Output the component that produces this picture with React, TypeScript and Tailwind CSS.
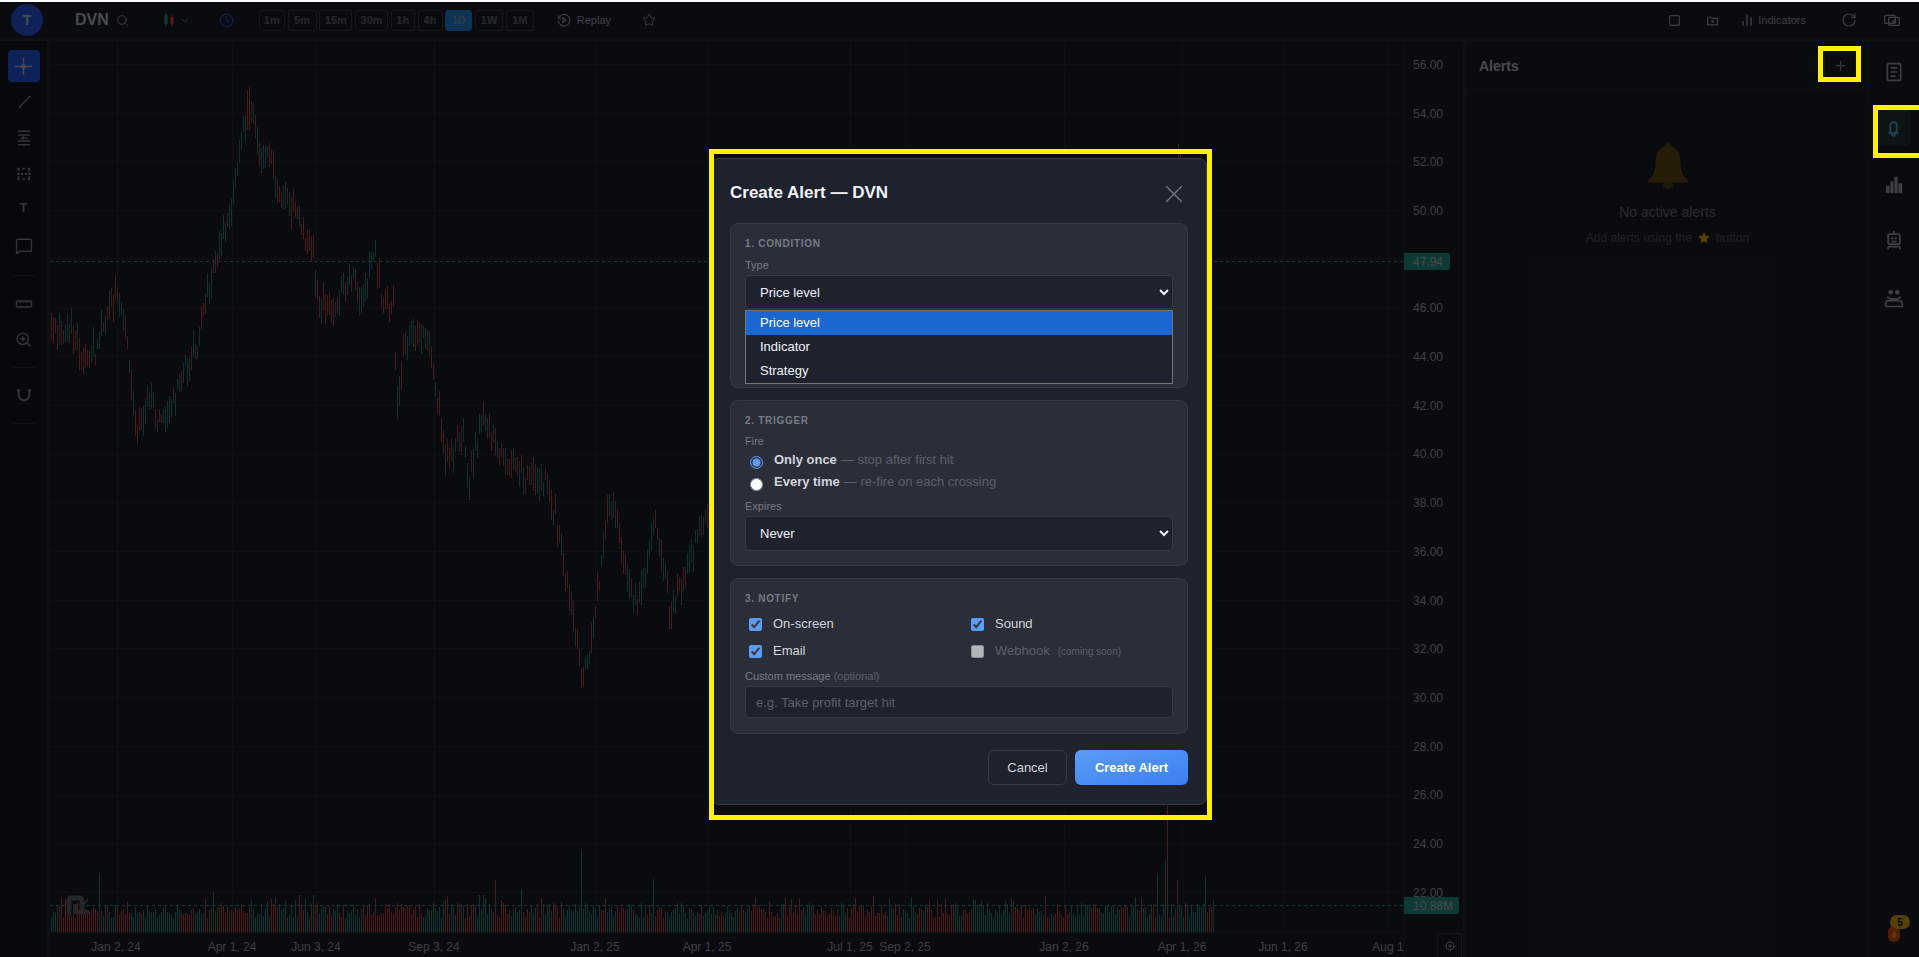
import React from "react";
import { Search, ChevronDown, Clock, Star, X, Plus, MessageSquare, ZoomIn, Square, RotateCw, ChartNoAxesColumn } from "lucide-react";

function rng(seed: number) {
  return () => {
    seed |= 0; seed = (seed + 0x6d2b79f5) | 0;
    let t = Math.imul(seed ^ (seed >>> 15), 1 | seed);
    t = (t + Math.imul(t ^ (t >>> 7), 61 | t)) ^ t;
    return ((t ^ (t >>> 14)) >>> 0) / 4294967296;
  };
}

const KEY: [number, number][] = [
  [52,327],[60,337],[70,325],[83,363],[95,350],[110,300],[120,297],[128,350],[135,433],[150,397],[160,430],[177,387],[197,343],[213,267],[230,213],[243,130],[250,104],[256,130],[260,163],[270,153],[277,193],[298,213],[313,260],[318,297],[333,313],[350,273],[362,303],[373,250],[383,303],[393,310],[397,413],[403,347],[425,330],[437,400],[447,463],[463,430],[468,487],[483,410],[507,467],[523,473],[547,480],[557,527],[573,617],[582,680],[592,640],[607,510],[613,500],[630,593],[638,607],[655,513],[670,613],[687,573],[700,523],[708,520],[800,500],[1000,400],[1170,300],[1200,300],
];
function priceY(x: number) {
  for (let i = 0; i < KEY.length - 1; i++) {
    const [a, b] = KEY[i], [c, d] = KEY[i + 1];
    if (x >= a && x <= c) return b + ((d - b) * (x - a)) / (c - a);
  }
  return KEY[0][1];
}

const gridX = [117, 232, 316, 434, 595, 707, 850, 905, 1064, 1182, 1283, 1388];
const gridY = Array.from({ length: 18 }, (_, i) => 64 + i * 48.7);

function buildSeries() {
  const r = rng(11);
  let up = "", down = "", volUp = "", volDown = "";
  const spikes: Record<number, [number, boolean]> = {
    99: [873, true], 213: [892, true], 313: [895, true], 495: [880, false], 521: [889, true], 581: [849, true], 653: [879, true], 1167: [800, false], 1165: [860, true], 1157: [873, true], 1205: [876, true], 1177: [880, false],
  };
  let last = priceY(51);
  let run = 0;
  let runUp = true;
  for (let x = 51; x <= 1213; x += 2) {
    const y = priceY(x);
    const isUp = y < last ? r() < 0.68 : r() < 0.36;
    last = y;
    if (run <= 0) { run = 1 + Math.floor(r() * 5); runUp = r() > 0.5; }
    run--;
    if (x <= 1206) {
      const c = y + (r() - 0.5) * 18;
      const top = Math.round(c - 4 - r() * 14);
      const bot = Math.round(c + 4 + r() * 14);
      const seg = `M${x + 0.5} ${top}V${bot}`;
      if (isUp) up += seg; else down += seg;
    }
    const sp = spikes[x];
    const volTop = sp ? sp[0] : Math.round(918 - r() * 15 - (r() < 0.15 ? 8 : 0));
    const green = sp ? sp[1] : runUp;
    const seg = `M${x + 0.5} ${volTop}V932`;
    if (green) volUp += seg; else volDown += seg;
  }
  return { up, down, volUp, volDown };
}
const S = buildSeries();

function Chart() {
  return (
    <svg viewBox="50 41 1353 891" className="block w-[1353px] h-[891px]" shapeRendering="crispEdges">
      {gridX.map((x) => <path key={x} d={`M${x + 0.5} 41V932`} stroke="#2a2e39" />)}
      {gridY.map((y) => <path key={y} d={`M50 ${Math.round(y) + 0.5}H1403`} stroke="#2a2e39" />)}
      <path d={S.volUp} stroke="#26a69a" strokeOpacity="0.9" fill="none" />
      <path d={S.volDown} stroke="#ef5350" strokeOpacity="0.9" fill="none" />
      <path d={S.up} stroke="#26a69a" strokeOpacity="0.85" fill="none" />
      <path d={S.down} stroke="#ef5350" strokeOpacity="0.85" fill="none" />
      <path d="M1178.5 144V175M1180.5 150V175M247.500 90V130M249.500 87V131" stroke="#ef5350" strokeOpacity="0.85" fill="none" />
      <path d="M50 261.5H1403M50 905.5H1403" stroke="#26a69a" strokeDasharray="3 3" />
      <g shapeRendering="auto" fill="none" stroke="#6a6d78" strokeWidth="5">
        <path d="M71 913c-1 0-2-1-2-3v-9c0-2 1-3 3-3h7c2 0 3 1 3 3v10" />
        <path d="M75 904v8h14" strokeWidth="4" />
        <path d="M88 899l-6 8" strokeWidth="1.5" />
      </g>
    </svg>
  );
}

const I = ({ children, className = "w-[18px] h-[18px]" }: { children: React.ReactNode; className?: string }) => (
  <svg viewBox="0 0 24 24" fill="none" stroke="currentColor" strokeWidth="2" className={className}>{children}</svg>
);

function LeftBar() {
  return (
    <div className="flex flex-col items-center w-[47px] bg-[#131722] text-[#9598a1]">
      <div className="mt-[9px] flex items-center justify-center w-8 h-8 rounded bg-[#2962ff] text-[#d1d4dc]">
        <I className="w-[19px] h-[19px]"><path d="M12 1v22M1 12h22" strokeWidth="1.8" /><circle cx="12" cy="12" r="3" fill="currentColor" stroke="none" /></I>
      </div>
      <div className="mt-[2px] flex flex-col items-center w-full">
        <div className="h-9 flex items-center"><I><path d="M5 20 20 4" /></I></div>
        <div className="h-9 flex items-center"><I><path d="M4 3h16M4 8h16M4 16h16M4 21h16" strokeWidth="2" /><path d="M8 12h8M10 10l2 2-2 2" strokeWidth="2" /></I></div>
        <div className="h-9 flex items-center"><I><path d="M3 5h4M10 5h4M17 5h4M3 19h4M10 19h4M17 19h4M3 12h18M5 5v14M19 5v14" strokeDasharray="3 2" strokeWidth="2.6" /></I></div>
        <div className="h-9 flex items-center text-[13px] font-bold mt-[-2px]">T</div>
        <div className="h-9 flex items-center mt-[2px]"><MessageSquare className="w-[18px] h-[18px]" strokeWidth={1.8} /></div>
      </div>
      <div className="mt-[11px] w-6 h-px bg-[#2a2e39]" />
      <div className="mt-[10px] h-9 flex items-center"><I className="w-[18px] h-[18px]"><rect x="2" y="8" width="20" height="8" rx="2" strokeWidth="2.2" /><path d="M7 8v3M11 8v3M15 8v3M19 8v3" strokeWidth="1.4" /></I></div>
      <div className="h-9 mt-[-1px] flex items-center"><ZoomIn className="w-[17px] h-[17px]" strokeWidth={2} /></div>
      <div className="mt-[10px] w-6 h-px bg-[#2a2e39]" />
      <div className="mt-[9px] h-9 flex items-center"><I className="w-[16px] h-[16px]"><path d="M4 3v9a8 8 0 0 0 16 0V3" strokeWidth="3" /><path d="M1.500 5h5M17.500 5h5" strokeWidth="1.500" /></I></div>
      <div className="mt-[10px] w-6 h-px bg-[#2a2e39]" />
    </div>
  );
}

const intervals: [string, string][] = [["1m", "w-[26px]"], ["5m", "w-[29px]"], ["15m", "w-[33px]"], ["30m", "w-[33px]"], ["1h", "w-[24px]"], ["4h", "w-[25px]"], ["1D", "w-[27px]"], ["1W", "w-[28px]"], ["1M", "w-[28px]"]];

function Header() {
  return (
    <div className="flex items-center h-[36px] bg-[#1e222d] text-[#b2b5be]">
      <div className="ml-[11px] flex items-center justify-center w-8 h-8 rounded-full bg-[#2962ff] text-[14px] font-bold text-[#d1d4dc]">T</div>
      <div className="ml-[32px] text-[16px] font-bold text-[#d1d4dc]">DVN</div>
      <Search className="ml-[7px] w-[13px] h-[13px]" strokeWidth={1.8} />
      <svg viewBox="0 0 16 22" className="ml-[34px] w-3 h-[18px]"><path d="M4 1v20" stroke="#26a69a" /><rect x="2" y="4" width="4" height="13" fill="#26a69a" /><path d="M12 3v18" stroke="#ef5350" /><rect x="10" y="7" width="4" height="10" fill="#ef5350" /></svg>
      <ChevronDown className="ml-[4px] w-[11px] h-[11px]" strokeWidth={2} />
      <Clock className="ml-[29px] w-[15px] h-[15px] text-[#2962ff]" strokeWidth={1.8} />
      <div className="ml-[25px] flex items-center gap-[2.75px]">
        {intervals.map(([t, w]) => (
          <div key={t} className={`${w} h-[21px] flex items-center justify-center rounded-[3px] border text-[11px] font-bold ${t === "1D" ? "bg-[#2196f3] border-[#2196f3] text-[#7fa8c9]" : "border-[#434651] text-[#6f7280]"}`}>{t}</div>
        ))}
      </div>
      <svg viewBox="0 0 24 24" fill="none" stroke="currentColor" strokeWidth="1.8" className="ml-[23px] w-[14px] h-[14px]"><path d="M3 8a10 10 0 1 1-1 5" /><path d="M2 4v5h5" /><path d="M10 8l5 4-5 4z" /></svg>
      <span className="ml-[6px] text-[11px]">Replay</span>
      <Star className="ml-[31px] w-[14px] h-[14px]" strokeWidth={1.6} />
      <div className="flex-1" />
      <Square className="w-[13px] h-[13px]" strokeWidth={2} />
      <svg viewBox="0 0 24 24" fill="none" stroke="currentColor" strokeWidth="2" className="ml-[25px] w-[13px] h-[13px]"><path d="M3 6h6l2 2h10v12H3z" /><circle cx="12" cy="14" r="1.4" fill="currentColor" /></svg>
      <ChartNoAxesColumn className="ml-[21px] w-[14px] h-[14px]" strokeWidth={2.4} />
      <span className="ml-[4px] text-[11px]">Indicators</span>
      <RotateCw className="ml-[35px] w-[16px] h-[16px]" strokeWidth={1.8} />
      <svg viewBox="0 0 24 20" fill="none" stroke="currentColor" strokeWidth="2" className="ml-[27px] mr-[19px] w-[16px] h-[14px]"><rect x="1" y="3" width="16" height="12" rx="2" /><rect x="7" y="6" width="16" height="12" rx="2" /><path d="M15 9v6M12 12h6" strokeWidth="1.6" /></svg>
    </div>
  );
}

const prices = ["56.00","54.00","52.00","50.00","48.00","46.00","44.00","42.00","40.00","38.00","36.00","34.00","32.00","30.00","28.00","26.00","24.00","22.00"];
const times: [string, number][] = [["Jan 2, 24",116],["Apr 1, 24",232],["Jun 3, 24",316],["Sep 3, 24",434],["Jan 2, 25",595],["Apr 1, 25",707],["Jul 1, 25",850],["Sep 2, 25",905],["Jan 2, 26",1064],["Apr 1, 26",1182],["Jun 1, 26",1283],["Aug 1",1388]];

function PriceAxis() {
  return (
    <div className="relative w-[60px] border-l border-[#2a2e39] text-[12px] text-[#b2b5be] leading-none">
      <div className="mt-[-0.4px] flex flex-col pl-[9px]">
        {prices.map((p) => <div key={p} className="h-[48.7px] shrink-0 flex items-center">{p}</div>)}
      </div>
      <div className="absolute left-0 top-[212px] w-[46px] h-[17px] rounded-r-[2px] bg-[#26a69a] text-[#d1d4dc] flex items-center pl-[9px]">47.94</div>
      <div className="absolute left-0 top-[856px] w-[55px] h-[17px] rounded-r-[2px] bg-[#26a69a] text-[#d1d4dc] flex items-center pl-[9px]">10.88M</div>
      <div className="absolute left-[33px] bottom-0 w-[25px] h-[24px] border border-b-0 border-[#434651] rounded-t-[3px] flex items-center justify-center">
        <svg viewBox="0 0 24 24" fill="none" stroke="currentColor" strokeWidth="2" className="w-[12px] h-[12px]"><circle cx="12" cy="12" r="8" /><circle cx="12" cy="12" r="2.5" /><path d="M12 1v3M12 20v3M1 12h3M20 12h3" /></svg>
      </div>
    </div>
  );
}

function AlertsPanel() {
  return (
    <div className="flex-1 flex flex-col">
      <div className="h-[49px] shrink-0 flex items-center justify-between border-b border-[#2a2e39] pl-[12px] pr-[12px]">
        <span className="mt-[2px] text-[14px] font-bold text-[#d1d4dc]">Alerts</span>
        <div className="w-[32px] h-[26px] flex items-center justify-center rounded-[3px] border border-[#2a2e39] text-[#9598a1]"><Plus className="w-[15px] h-[15px]" strokeWidth={2} /></div>
      </div>
      <div className="flex flex-col items-center pt-[51px]">
        <svg viewBox="0 0 48 52" className="w-[44px] h-[49px]"><path d="M24 1c2 0 3.500 1.500 3.500 3.500 C36 7 38 14 38 24c0 8 3 13 8 18c1 2 0 3-2 3H4c-2 0-3-1-2-3c5-5 8-10 8-18C10 14 12 7 20.500 4.500C20.500 2.500 22 1 24 1z" fill="#6b5316" stroke="#000" strokeOpacity="0.4" strokeWidth="1.5" /><ellipse cx="24" cy="47.500" rx="6" ry="4" fill="#5c4712" /></svg>
        <div className="mt-[12px] text-[14px] text-[#787b86]">No active alerts</div>
        <div className="mt-[6px] flex items-center text-[12px] text-[#5d606b]">Add alerts using the<Star className="mx-[6px] w-[12px] h-[12px] text-[#f5b61d]" fill="currentColor" strokeWidth={1} />button</div>
      </div>
    </div>
  );
}

function RightBar() {
  return (
    <div className="relative w-[51px] border-l border-[#2a2e39] flex flex-col items-center text-[#b2b5be]">
      <div className="h-[56px] mt-[3px] flex items-center"><svg viewBox="0 0 24 24" fill="none" stroke="currentColor" strokeWidth="2" className="w-[20px] h-[20px]"><rect x="4" y="2" width="16" height="20" rx="2" /><path d="M8 7h8M8 12h8M8 17h6" /></svg></div>
      <div className="w-[34px] h-[36px] mt-[10px] ml-[-2px] rounded-[4px] bg-[#283840] flex items-center justify-center text-[#4fc3f7]"><svg viewBox="0 0 24 24" fill="none" stroke="currentColor" strokeWidth="2.400" className="w-[19px] h-[19px]"><path d="M8 17V8a4 4 0 0 1 8 0v9M5.500 17.500h13M10 18v1a2 2 0 0 0 4 0v-1" /></svg></div>
      <div className="h-[56px] mt-[11px] flex items-center"><svg viewBox="0 0 20 20" fill="currentColor" className="w-[18px] h-[18px]"><rect x="1" y="11" width="4" height="8" /><rect x="6" y="6" width="3.500" height="13" /><rect x="10.500" y="1" width="3.500" height="18" /><rect x="15" y="8" width="4" height="11" /></svg></div>
      <div className="h-[56px] mt-[-1px] flex items-center"><svg viewBox="0 0 24 24" fill="none" stroke="currentColor" strokeWidth="2.200" className="w-[20px] h-[20px]"><path d="M12 1v4" /><rect x="5" y="5" width="14" height="12" rx="2" /><path d="M9 9l2 2M15 9l-2 2M9 14h6M5 20v3M19 20v3M5 20h14" /></svg></div>
      <div className="h-[56px] mt-[3px] flex items-center"><svg viewBox="0 0 24 24" fill="none" stroke="currentColor" strokeWidth="2" className="w-[20px] h-[20px]"><circle cx="8" cy="4" r="1.800" fill="currentColor" /><circle cx="16" cy="4" r="1.800" fill="currentColor" /><path d="M4 9c1 4 15 4 16 0M2 19c0-5 3-5 3-5h14s3 0 3 5v2H2z" /></svg></div>
      <div className="absolute left-[19px] top-[885px] flex items-center justify-center w-[12px] h-[16px] rounded-full bg-[#f1570f]"><svg viewBox="0 0 10 12" className="w-[8px] h-[10px]"><path d="M5 1c1 3 3 4 3 7a3 3 0 0 1-6 0c0-2 1-2 1.500-4 1 .5 1.500 0 1.500-3z" fill="#f5b61d" /></svg></div>
      <div className="absolute left-[21px] top-[874px] flex items-center justify-center w-[20px] h-[14px] rounded-[7px] bg-[#f5b61d] text-[10px] font-bold text-[#131722]">5</div>
    </div>
  );
}

const Section = ({ title, className = "", children }: { title: string; className?: string; children: React.ReactNode }) => (
  <div className={`relative rounded-[8px] border border-[#363a45] bg-[#2a2e39] px-[14px] pt-[14px] ${className}`}>
    <div className="text-[10px] leading-[12px] font-bold tracking-[0.7px] text-[#787b86]">{title}</div>
    {children}
  </div>
);
const Lbl = ({ className = "", children }: { className?: string; children: React.ReactNode }) => (
  <div className={`text-[11px] leading-[13px] text-[#787b86] ${className}`}>{children}</div>
);
const fieldCls = "block w-full rounded-[4px] border border-[#363a45] bg-[#1e222d] text-[13px] text-[#f0f3fa] outline-none";

function Check({ label, disabled, note }: { label: string; disabled?: boolean; note?: string }) {
  return (
    <label className={`flex items-center h-[16px] pl-[4px] text-[13px] ${disabled ? "text-[#5d606b]" : "text-[#d1d4dc]"}`}>
      <input type="checkbox" defaultChecked={!disabled} disabled={disabled} className="m-0 w-[13px] h-[13px] accent-[#5b9cf6]" />
      <span className="ml-[11px]">{label}</span>
      {note && <span className="ml-[8px] text-[10px]">{note}</span>}
    </label>
  );
}

function Radio({ bold, rest, checked }: { bold: string; rest: string; checked?: boolean }) {
  return (
    <label className="flex items-center h-[22px] pl-[5px] text-[#d1d4dc]">
      <input type="radio" name="fire" defaultChecked={checked} className="m-0 mt-[5px] w-[13px] h-[13px] accent-[#5b9cf6]" />
      <span className="ml-[11px] text-[13px] font-bold">{bold}</span>
      <span className="ml-[4px] text-[13px] text-[#5d606b]">{rest}</span>
    </label>
  );
}

function Modal() {
  return (
    <div className="absolute z-20 left-[711px] top-[158px] w-[496px] h-[647px] flex flex-col rounded-[8px] border border-[#363a45] bg-[#1e222d] px-[18px]">
      <div className="h-[64px] shrink-0 flex items-center justify-between pt-[3px]">
        <h2 className="text-[17px] font-bold text-[#f0f3fa]">Create Alert — DVN</h2>
        <X className="mr-[-1px] mt-[3px] w-[30px] h-[30px] text-[#787b86]" strokeWidth={1} />
      </div>
      <Section title="1. CONDITION" className="h-[165px] shrink-0">
        <Lbl className="mt-[9px]">Type</Lbl>
        <select className={`${fieldCls} mt-[3px] h-[34px] pl-[10px]`} defaultValue="Price level">
          <option>Price level</option>
          <option>Indicator</option>
          <option>Strategy</option>
        </select>
        <div className="absolute left-[14px] right-[14px] top-[86px] border border-[#767676] bg-[#1e222d] text-[13px] text-[#f0f3fa]">
          <div className="h-[24px] flex items-center pl-[14px] bg-[#1a67d2] text-white">Price level</div>
          <div className="h-[24px] flex items-center pl-[14px]">Indicator</div>
          <div className="h-[24px] flex items-center pl-[14px]">Strategy</div>
        </div>
      </Section>
      <Section title="2. TRIGGER" className="mt-[12px] h-[166px] shrink-0">
        <Lbl className="mt-[8px]">Fire</Lbl>
        <div className="mt-[1px]">
          <Radio bold="Only once" rest="— stop after first hit" checked />
          <Radio bold="Every time" rest="— re-fire on each crossing" />
        </div>
        <Lbl className="mt-[7px]">Expires</Lbl>
        <select className={`${fieldCls} mt-[3px] h-[35px] pl-[10px]`} defaultValue="Never">
          <option>Never</option>
          <option>1 day</option>
          <option>1 week</option>
        </select>
      </Section>
      <Section title="3. NOTIFY" className="mt-[12px] h-[156px] shrink-0">
        <div className="mt-[11px] grid grid-cols-2 gap-x-[16px] gap-y-[11px]">
          <Check label="On-screen" />
          <Check label="Sound" />
          <Check label="Email" />
          <Check label="Webhook" disabled note="(coming soon)" />
        </div>
        <Lbl className="mt-[11px]">Custom message <span className="text-[#5d606b]">(optional)</span></Lbl>
        <input className={`${fieldCls} mt-[3px] h-[32px] px-[10px] placeholder:text-[#5d606b]`} placeholder="e.g. Take profit target hit" />
      </Section>
      <div className="mt-[16px] flex justify-end gap-[8px]">
        <button className="w-[79px] h-[35px] rounded-[6px] border border-[#363a45] text-[13px] text-[#d1d4dc]">Cancel</button>
        <button className="w-[113px] h-[35px] rounded-[6px] bg-gradient-to-br from-[#5b9cf6] to-[#3b7ff0] text-[13px] font-bold text-white">Create Alert</button>
      </div>
    </div>
  );
}

export default function App() {
  return (
    <div className="relative flex flex-col h-screen w-full overflow-hidden bg-[#1e222d] font-['Liberation_Sans',Arial,sans-serif]">
      <div className="relative z-20 h-[2px] shrink-0 bg-white" />
      <Header />
      <div className="h-[3px] shrink-0 bg-[#2a2e39]" />
      <div className="flex flex-1 min-h-0">
        <LeftBar />
        <div className="w-[3px] bg-[#2a2e39]" />
        <div className="w-[1353px] flex flex-col">
          <Chart />
          <div className="relative flex-1 border-t border-[#2a2e39] text-[12px] text-[#b2b5be]">
            {times.map(([t, x]) => (
              <span key={t} className="absolute top-[5px] -translate-x-1/2 whitespace-nowrap" style={{ left: x - 50 }}>{t}</span>
            ))}
          </div>
        </div>
        <PriceAxis />
        <div className="w-[4px] bg-[#2a2e39]" />
        <AlertsPanel />
        <RightBar />
      </div>

      <div className="absolute inset-0 z-10 bg-black/65" />
      <Modal />

      <div className="absolute z-30 left-[709px] top-[149px] w-[503px] h-[671px] border-[5px] border-[#fff200] pointer-events-none" />
      <div className="absolute z-30 left-[1818px] top-[46px] w-[43px] h-[36px] border-[5px] border-[#fff200] pointer-events-none" />
      <div className="absolute z-30 left-[1873px] top-[105px] w-[46px] h-[53px] border-y-[5px] border-l-[5px] border-[#fff200] pointer-events-none" />
    </div>
  );
}
